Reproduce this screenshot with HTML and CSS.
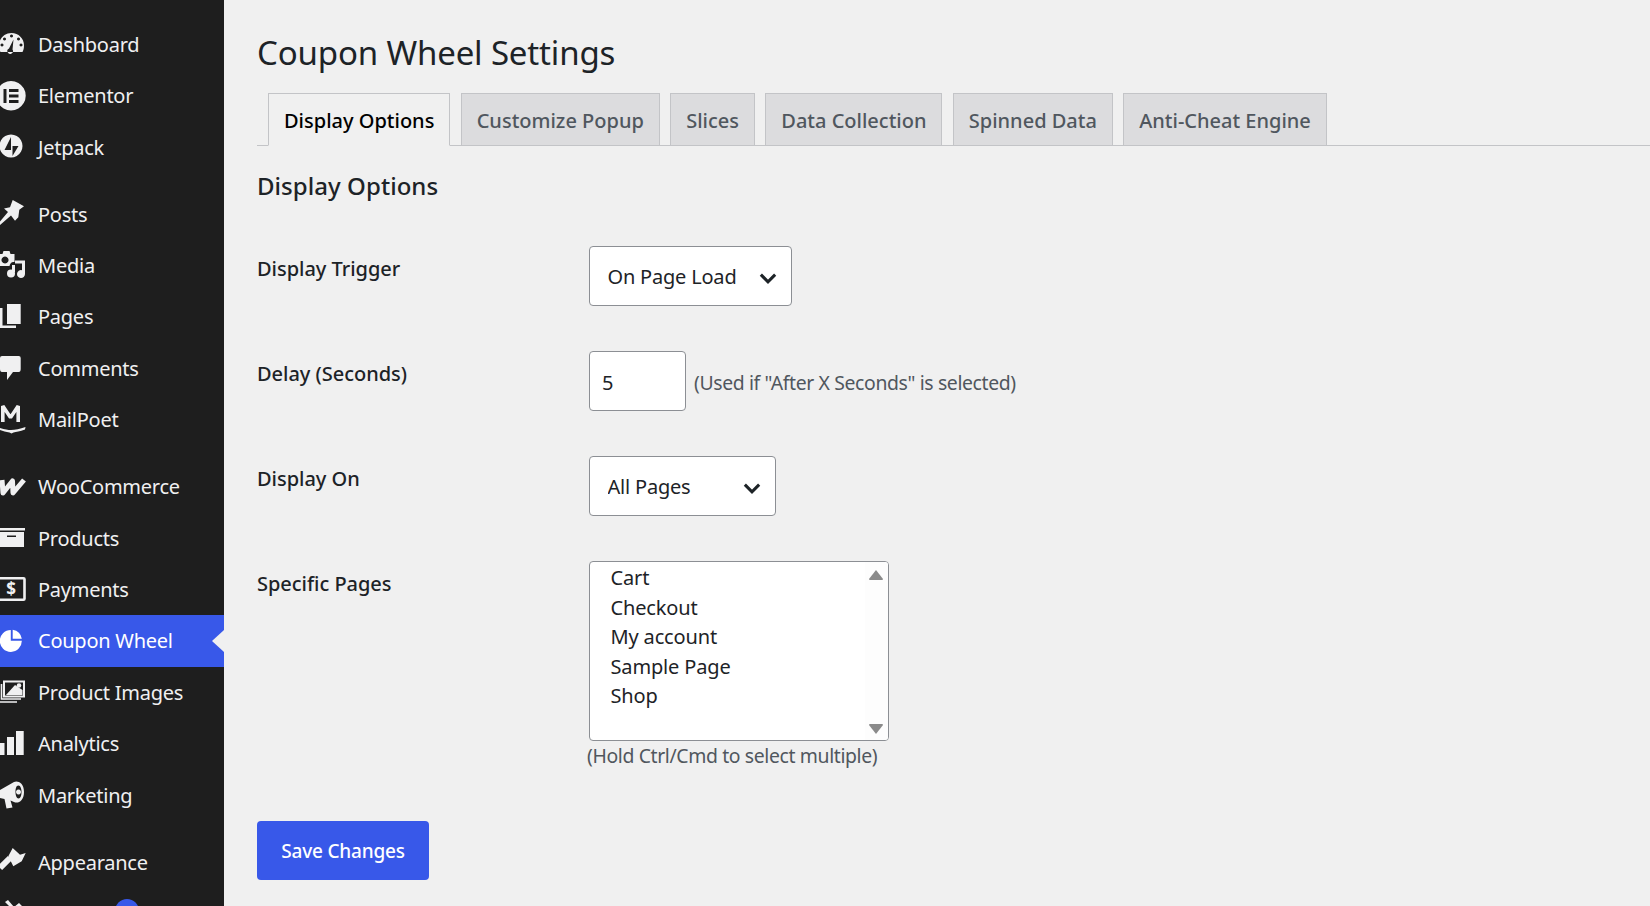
FILE: index.html
```html
<!DOCTYPE html>
<html lang="en">
<head>
<meta charset="utf-8">
<title>Coupon Wheel Settings</title>
<link rel="stylesheet" href="styles.css">
</head>
<body>
<nav class="sidebar">
  <ul class="menu">
    <li class="item"><svg class="icon" viewBox="0 0 38 40"><path fill-rule="evenodd" d="M11.5 9C4.5 9 -1 14.500 -1 21.500C-1 24 -.5 26 .5 28H22.500C23.500 26 24 24 24 21.500C24 14.500 18.500 9 11.500 9ZM11.500 10.500a1.500 1.500 0 1 0 .01 0ZM4.500 13.500a1.500 1.500 0 1 0 .01 0ZM18.500 13.500a1.500 1.500 0 1 0 .01 0ZM2 19.500a1.500 1.500 0 1 0 .01 0ZM21 19.500a1.500 1.500 0 1 0 .01 0ZM13.500 15.500L9 24.500a2.800 2.800 0 1 0 3.500 1Z"/></svg><span>Dashboard</span></li>
    <li class="item"><svg class="icon" viewBox="0 0 38 40"><path fill-rule="evenodd" d="M11 5a14.700 14.700 0 1 0 .01 0ZM3.500 13H6.500V27H3.500ZM9 13H18.500V16H9ZM9 18.500H18.500V21.500H9ZM9 24H18.500V27H9Z"/></svg><span>Elementor</span></li>
    <li class="item"><svg class="icon" viewBox="0 0 38 40"><path fill-rule="evenodd" d="M11 7.500a11.500 11.500 0 1 0 .01 0ZM11 10V23H4.500ZM12.500 19H18.500L12.500 29Z"/></svg><span>Jetpack</span></li>
    <li class="item sep"><svg class="icon" viewBox="0 0 38 40"><path d="M12.700 6L24 12.300L19.300 15.700L18.300 23.300L15 26.700L11 21.500L0 31V27.500L8 18L4 14.500L10 13.300Z"/></svg><span>Posts</span></li>
    <li class="item"><svg class="icon" viewBox="0 0 38 40"><path fill-rule="evenodd" d="M-2 9H2.500L3.500 6H9.500L10.500 9H14.500V17H13.500C11 17 10 19 9.500 21H-2ZM5 11.500a3.500 3.500 0 1 0 .01 0Z"/><path d="M15 15.500H25V29a4 4 0 1 1-3-3.800V18.500H15Z"/><circle cx="11" cy="28.500" r="4"/><path d="M12 27V20H15V27Z"/></svg><span>Media</span></li>
    <li class="item"><svg class="icon" viewBox="0 0 38 40"><path d="M7 7H20.700V27H7Z"/><path d="M0 11H2.500V28.500H16V31H0Z"/></svg><span>Pages</span></li>
    <li class="item"><svg class="icon" viewBox="0 0 38 40"><path d="M2 8H18.700Q20.700 8 20.700 10V21Q20.700 24 18.700 24H13L7 32V24H2Q0 24 0 21V10Q0 8 2 8Z"/></svg><span>Comments</span></li>
    <li class="item"><svg class="icon" viewBox="0 0 38 40"><path class="stroke" d="M2.800 22V6L10.500 17.500L18.200 6V22"/><path d="M0 28C5 29.500 8 30 11 30C15 30 20 29 25.500 27L25 29.500C20 31.500 16 32 13.500 32.500L11.500 33.500L9.500 32.500C6 32 3 31 0 30Z"/></svg><span>MailPoet</span></li>
    <li class="item sep"><svg class="icon" viewBox="0 0 38 40"><path class="stroke-w" d="M2 13L3 26L12.500 14L13 26L24 13"/></svg><span>WooCommerce</span></li>
    <li class="item"><svg class="icon" viewBox="0 0 38 40"><path fill-rule="evenodd" d="M-2 10H25V12.500H-2ZM-2 14H24V29H-2ZM7 17.500V19H16V17.500Z"/></svg><span>Products</span></li>
    <li class="item"><svg class="icon" viewBox="0 0 38 40"><rect class="outline" x="-3" y="8.300" width="27.500" height="21.500" rx="1"/><text class="dollar" x="11" y="25">$</text></svg><span>Payments</span></li>
    <li class="item active"><svg class="icon" viewBox="0 0 38 40"><path d="M10.800 8.900V19.700H21.800A11 11 0 1 1 10.800 8.900Z"/><path d="M12.700 8.700A11 11 0 0 1 21.800 17.800H12.700Z"/></svg><span>Coupon Wheel</span></li>
    <li class="item"><svg class="icon" viewBox="0 0 38 40"><rect class="outline thin" x="4" y="9.500" width="20" height="15"/><path d="M6 23L15 13L22.500 18V23Z"/><circle cx="19" cy="13.500" r="2.300"/><path class="line" d="M1.500 12V27H21M-1 15V30H17"/></svg><span>Product Images</span></li>
    <li class="item"><svg class="icon" viewBox="0 0 38 40"><path d="M0 19H4.500V31H0ZM7 13H14V31H7ZM16 7H23.700V31H16Z"/></svg><span>Analytics</span></li>
    <li class="item"><svg class="icon" viewBox="0 0 38 40"><path fill-rule="evenodd" d="M0 15L14 7C17 5.500 24 7 24 17C24 26 18 29 14 27L10.500 25.500L12.500 32.500L6.500 33.500L4.500 24L0 23ZM18.500 10.500C16 10.500 15.500 14 15.500 17C15.500 20.500 16.500 23.500 18.500 23.500C20.500 23.500 21.500 20.500 21.500 17C21.500 14 20.500 10.500 18.500 10.500ZM18.500 14.500a2.500 2.500 0 1 0 .01 0Z"/></svg><span>Marketing</span></li>
    <li class="item sep"><svg class="icon" viewBox="0 0 38 40"><path d="M8.300 14.300L12.700 6L20 12.700L25.700 11L21.700 19.300L13.300 24.300Z"/><path class="handle" d="M0 26L10 16"/></svg><span>Appearance</span></li>
    <li class="item"><svg class="icon" viewBox="0 0 38 40"><path d="M5 8L8 6L14 13L19 9L23 13L18 23C14 26 10 25 8 23L1 30L0 28L6 20C4 17 5 14 9 12Z"/></svg><span>Plugins</span><b class="badge">1</b></li>
  </ul>
</nav>
<main class="content">
  <h1 class="title">Coupon Wheel Settings</h1>
  <div class="tabs">
    <a class="tab current">Display Options</a>
    <a class="tab">Customize Popup</a>
    <a class="tab">Slices</a>
    <a class="tab">Data Collection</a>
    <a class="tab">Spinned Data</a>
    <a class="tab">Anti-Cheat Engine</a>
  </div>
  <h2 class="section">Display Options</h2>
  <form class="form">
    <div class="row">
      <label class="label">Display Trigger</label>
      <div class="control">
        <div class="select w-trigger"><select><option>On Page Load</option></select><svg class="chev" viewBox="0 0 16 10"><path d="M1.500 1.500L8 8L14.500 1.500"/></svg></div>
      </div>
    </div>
    <div class="row">
      <label class="label">Delay (Seconds)</label>
      <div class="control inline">
        <input class="num" type="text" value="5">
        <span class="hint">(Used if "After X Seconds" is selected)</span>
      </div>
    </div>
    <div class="row">
      <label class="label">Display On</label>
      <div class="control">
        <div class="select w-on"><select><option>All Pages</option></select><svg class="chev" viewBox="0 0 16 10"><path d="M1.500 1.500L8 8L14.500 1.500"/></svg></div>
      </div>
    </div>
    <div class="row last">
      <label class="label">Specific Pages</label>
      <div class="control">
        <div class="listbox" role="listbox">
          <ul class="options">
            <li>Cart</li>
            <li>Checkout</li>
            <li>My account</li>
            <li>Sample Page</li>
            <li>Shop</li>
          </ul>
          <div class="scrollbar">
            <svg class="arrow" viewBox="0 0 16 12"><path d="M8 1L15 10Q15 11 14 11H2Q1 11 1 10Z"/></svg>
            <svg class="arrow" viewBox="0 0 16 12"><path d="M8 11L1 2Q1 1 2 1H14Q15 1 15 2Z"/></svg>
          </div>
        </div>
        <p class="hint below">(Hold Ctrl/Cmd to select multiple)</p>
      </div>
    </div>
    <button class="save" type="button">Save Changes</button>
  </form>
</main>
</body>
</html>
```
FILE: styles.css
```css
* { box-sizing: border-box; }
html, body { margin: 0; height: 100%; overflow: hidden; }
body {
  display: flex;
  height: 906px;
  background: #f0f0f0;
  color: #1d2327;
  font-family: "Noto Sans", "Open Sans", sans-serif;
  font-size: 20px;
  letter-spacing: -0.2px;
}
.sidebar { width: 224px; flex: none; height: 906px; overflow: hidden; background: #1e1e1e; color: #f0f0f1; }
.menu { list-style: none; margin: 18.6px 0 0; padding: 0; }
.item { display: flex; align-items: center; height: 51.43px; position: relative; letter-spacing: -0.25px; }
.item.sep { margin-top: 15.5px; }
.icon { width: 38px; height: 40px; flex: none; fill: #f0f0f1; overflow: hidden; }
.item.active { background: #3858e9; color: #fff; }
.item.active .icon { fill: #fff; }
.item.active::after {
  content: "";
  position: absolute;
  right: 0;
  top: 50%;
  margin-top: -11px;
  border: 11px solid transparent;
  border-right: 12px solid #f0f0f0;
  border-left: 0;
}
.stroke { fill: none; stroke: #f0f0f1; stroke-width: 3.6; stroke-linejoin: bevel; }
.stroke-w { fill: none; stroke: #f0f0f1; stroke-width: 5; stroke-linejoin: round; }
.handle { fill: none; stroke: #f0f0f1; stroke-width: 6; }
.outline { fill: none; stroke: #f0f0f1; stroke-width: 2.6; }
.outline.thin { stroke-width: 2; }
.line { fill: none; stroke: #f0f0f1; stroke-width: 1.6; }
.dollar { fill: #f0f0f1; font-size: 17px; font-weight: 700; text-anchor: middle; letter-spacing: 0; }
.badge {
  position: absolute;
  left: 115px;
  top: 11px;
  width: 24px;
  height: 24px;
  border-radius: 50%;
  background: #3858e9;
  color: #fff;
  font-size: 13px;
  font-weight: 400;
  text-align: center;
  line-height: 24px;
}
.content { flex: 1; min-width: 0; padding: 31px 0 0 33px; }
.title { margin: 0 0 18px; font-size: 33px; font-weight: 400; line-height: 44px; letter-spacing: -0.15px; }
.tabs { display: flex; gap: 10.3px; padding-left: 11px; border-bottom: 1px solid #c3c4c7; height: 53px; }
.tab {
  height: 53px;
  padding: 1px 15px 0;
  display: flex;
  align-items: center;
  border: 1px solid #c3c4c7;
  background: #dcdcde;
  color: #50575e;
  font-weight: 500;
  letter-spacing: 0;
}
.tab.current { background: #f0f0f0; border-bottom-color: #f0f0f0; color: #000; }
.section { margin: 23px 0 0; font-size: 24px; font-weight: 500; line-height: 34px; letter-spacing: 0.05px; }
.form { margin-top: 43px; }
.row { display: grid; grid-template-columns: 332px 1fr; height: 105px; }
.row.last { height: 260px; }
.label { font-weight: 500; line-height: 28px; padding-top: 9px; letter-spacing: -0.03px; }
.control.inline { display: flex; align-items: center; gap: 8px; height: 60px; }
.select { position: relative; height: 60px; }
.w-trigger { width: 203px; }
.w-on { width: 187px; }
.select select {
  appearance: none;
  width: 100%;
  height: 100%;
  padding: 0 40px 0 17.500px;
  border: 1px solid #8c8f94;
  border-radius: 4px;
  background: #fff;
  color: #1d2327;
  font: inherit;
  letter-spacing: inherit;
}
.chev { position: absolute; right: 15px; top: 26.500px; width: 18px; height: 11px; fill: none; stroke: #1d2327; stroke-width: 2.8; }
.num {
  width: 97px;
  height: 60px;
  padding: 2px 12px 0;
  border: 1px solid #8c8f94;
  border-radius: 4px;
  background: #fff;
  color: #1d2327;
  font: inherit;
}
.hint { color: #50575e; font-size: 19.4px; letter-spacing: -0.37px; padding-top: 2px; }
.listbox { position: relative; width: 300px; height: 180px; border: 1px solid #8c8f94; border-radius: 4px; background: #fff; overflow: hidden; }
.options { list-style: none; margin: 0; padding: 1px 0 0 20.500px; line-height: 29.5px; letter-spacing: -0.15px; }
.scrollbar {
  position: absolute;
  top: 0;
  right: 0;
  bottom: 0;
  width: 23px;
  padding: 7px 3px 5px;
  display: flex;
  flex-direction: column;
  justify-content: space-between;
  background: #fdfdfd;
}
.arrow { width: 16px; height: 12px; fill: #8a8a8a; display: block; }
.below { margin: 0 0 0 -2px; line-height: 28px; padding-top: 1px; }
.save {
  display: block;
  width: 172px;
  height: 59px;
  border: 0;
  border-radius: 4px;
  background: #3858e9;
  color: #fff;
  font: inherit;
  font-size: 19px;
  font-weight: 500;
  letter-spacing: -0.2px;
}
```
